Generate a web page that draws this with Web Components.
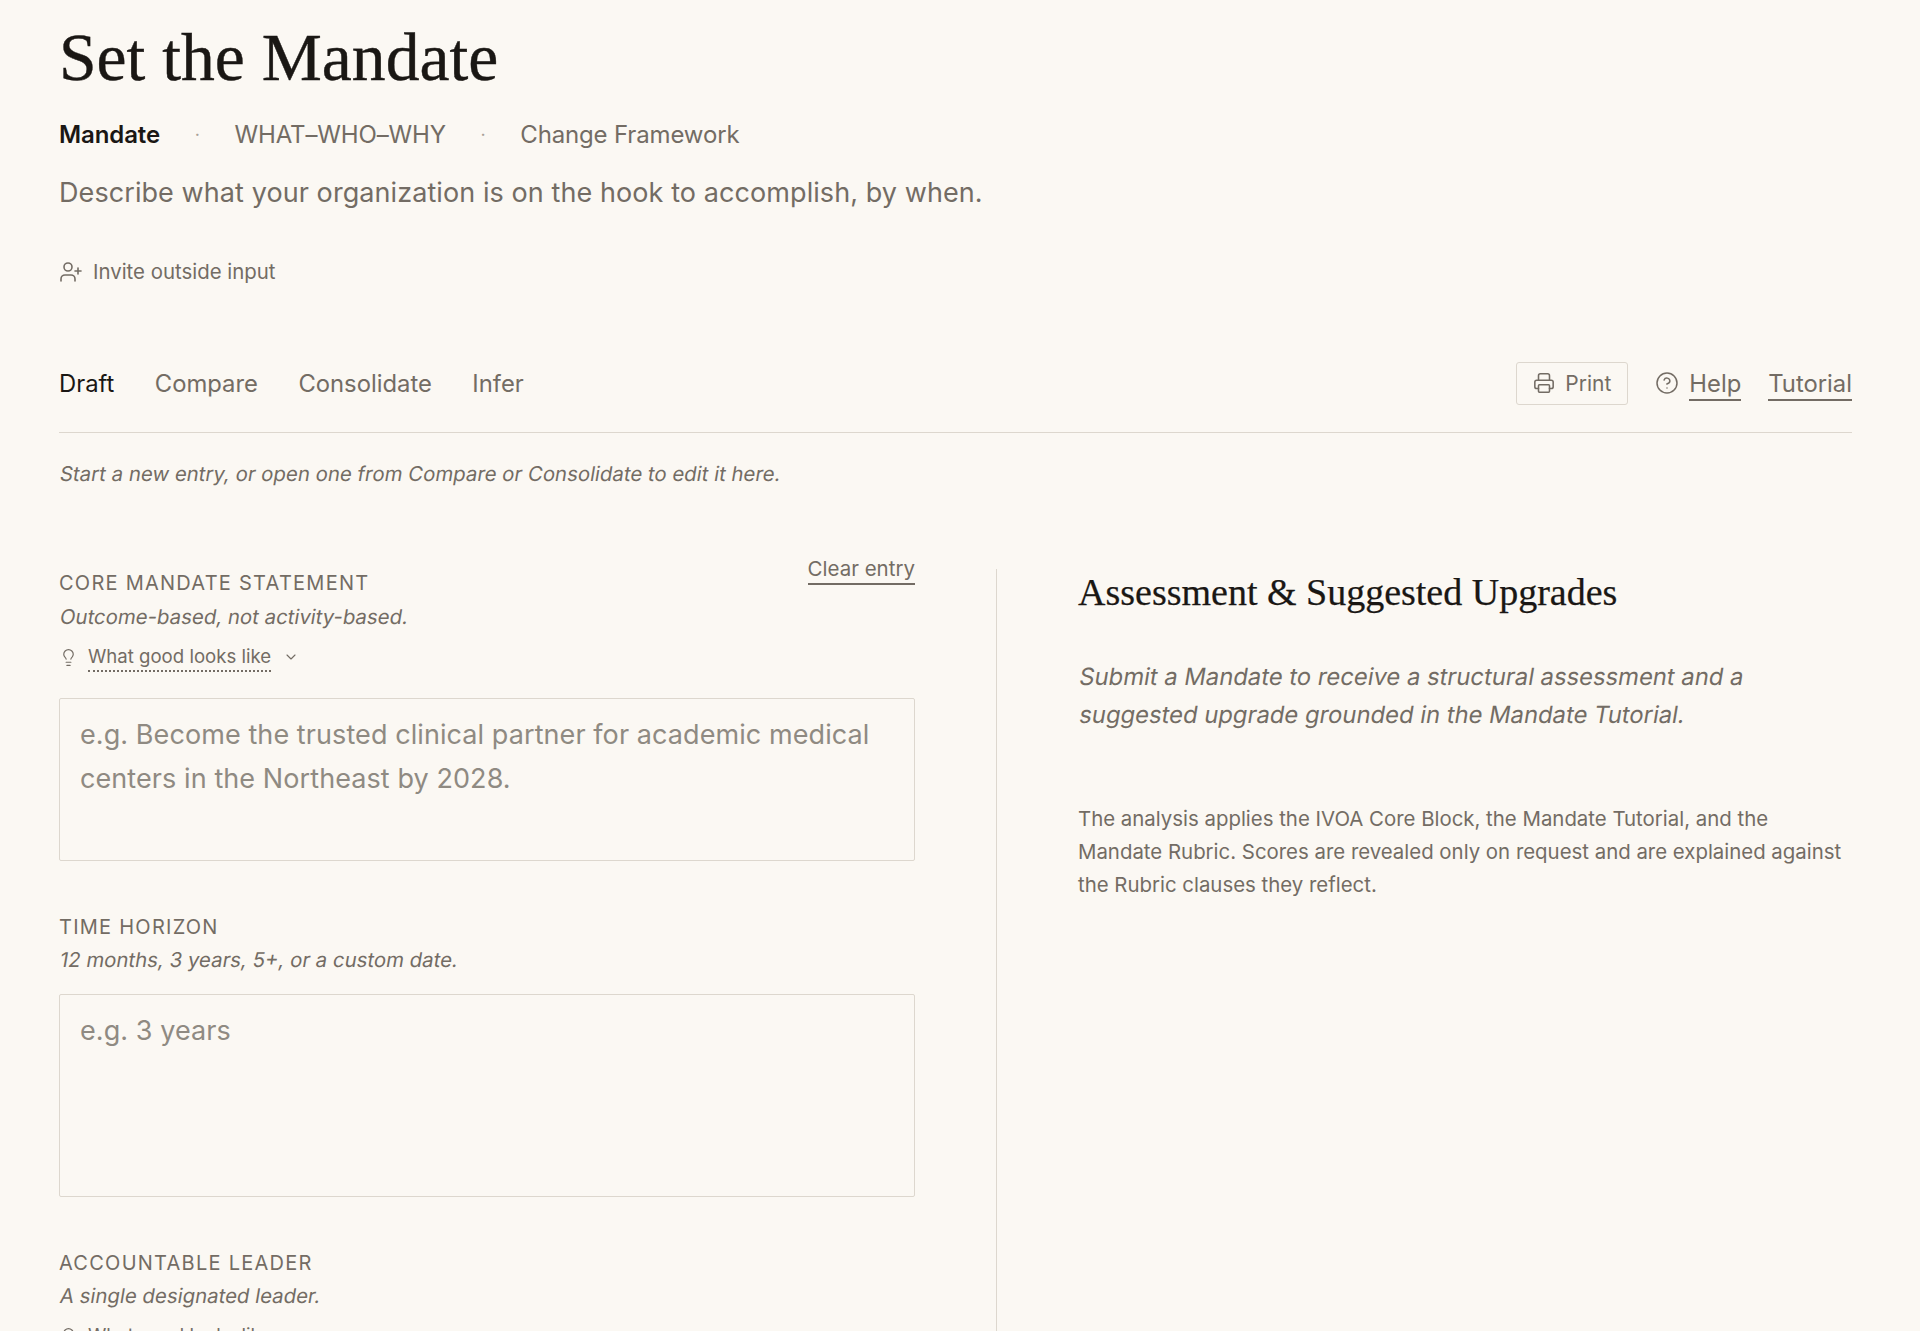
<!DOCTYPE html>
<html lang="en">
<head>
<meta charset="utf-8">
<title>Set the Mandate</title>
<style>
  html, body { margin: 0; height: 1331px; overflow: hidden; background: #fbf8f3; }
  body { font-family: Inter, sans-serif; color: #736c64; }
</style>
</head>
<body>
<mandate-page></mandate-page>

<script>
const icons = {
  invite: `<svg width="24" height="24" viewBox="0 0 24 24" fill="none" stroke="currentColor" stroke-width="1.6" stroke-linecap="round" stroke-linejoin="round"><path d="M16 21v-2a4 4 0 0 0-4-4H6a4 4 0 0 0-4 4v2"/><circle cx="9" cy="7" r="4"/><path d="M19 8v6"/><path d="M22 11h-6"/></svg>`,
  print: `<svg width="22" height="22" viewBox="0 0 24 24" fill="none" stroke="currentColor" stroke-width="1.7" stroke-linecap="round" stroke-linejoin="round"><path d="M6 9V4a2 2 0 0 1 2-2h8a2 2 0 0 1 2 2v5"/><path d="M6 18H4a2 2 0 0 1-2-2v-5a2 2 0 0 1 2-2h16a2 2 0 0 1 2 2v5a2 2 0 0 1-2 2h-2"/><rect x="6" y="14" width="12" height="8" rx="1"/></svg>`,
  help: `<svg width="24" height="24" viewBox="0 0 24 24" fill="none" stroke="currentColor" stroke-width="1.5" stroke-linecap="round" stroke-linejoin="round"><circle cx="12" cy="12" r="10"/><path d="M9.1 9a3 3 0 0 1 5.8 1c0 2-3 3-3 3"/><path d="M12 17h.01"/></svg>`,
  bulb: `<svg width="19" height="19" viewBox="0 0 24 24" fill="none" stroke="currentColor" stroke-width="1.5" stroke-linecap="round" stroke-linejoin="round"><path d="M15 14c.2-1 .7-1.7 1.5-2.5A5.7 5.7 0 0 0 18 8 6 6 0 0 0 6 8c0 1 .2 2.2 1.5 3.5.7.7 1.300 1.500 1.500 2.500"/><path d="M9 18h6"/><path d="M10 22h4"/></svg>`,
  chevron: `<svg width="16" height="16" viewBox="0 0 24 24" fill="none" stroke="currentColor" stroke-width="1.7" stroke-linecap="round" stroke-linejoin="round"><path d="m6 9 6 6 6-6"/></svg>`
}

// the reference italic is a slanted upright with a two-storey a, the installed Inter italic is not
customElements.define('slant-text', class extends HTMLElement {
  constructor () {
    super()
    this.attachShadow({ mode: 'open' }).innerHTML = `
      <style>
        :host { display: block; transform: skewX(-9.4deg); transform-origin: 0 75%; }
      </style>
      <slot></slot>`
  }
})

customElements.define('page-head', class extends HTMLElement {
  constructor () {
    super()
    this.attachShadow({ mode: 'open' }).innerHTML = `
      <style>
        :host { display: block; }
        h1 { margin: 0; font: 400 67.6px/72px "Liberation Serif", serif; color: #1a1714; -webkit-text-stroke: .4px #1a1714; }
        nav { display: flex; align-items: center; margin-top: 25px; font-size: 24px; line-height: 32px; letter-spacing: -.15px; }
        nav b { font-weight: 600; color: #1a1714; letter-spacing: -.1px; }
        nav i { font-style: normal; color: #a8a197; margin: 0 34.7px; font-size: 18px; }
        p { margin: 23.5px 0 0; font-size: 27px; line-height: 36px; letter-spacing: .08px; }
        .invite { display: flex; align-items: center; gap: 10px; margin-top: 46.5px; font-size: 20.4px; line-height: 30px; }
        svg { display: block; }
      </style>
      <h1>Set the Mandate</h1>
      <nav><b>Mandate</b><i>·</i><span>WHAT–WHO–WHY</span><i>·</i><span>Change Framework</span></nav>
      <p>Describe what your organization is on the hook to accomplish, by when.</p>
      <div class="invite">${icons.invite}<span>Invite outside input</span></div>`
  }
})

customElements.define('tab-bar', class extends HTMLElement {
  constructor () {
    super()
    this.attachShadow({ mode: 'open' }).innerHTML = `
      <style>
        :host { display: flex; align-items: center; height: 70px; padding-bottom: 14px; border-bottom: 1px solid #ddd7ce; font-size: 23.8px; }
        .tabs { display: flex; gap: 40.5px; flex: 1; margin-top: 1px; }
        .on { color: #1a1714; }
        .print { display: flex; align-items: center; gap: 10px; box-sizing: border-box; height: 43px; padding: 0 16px; border: 1px solid #ddd7ce; border-radius: 3px; font-size: 21px; margin-right: 27px; }
        .help { display: flex; align-items: center; gap: 10px; margin-right: 27px; }
        a { border-bottom: 2px solid #736c64; line-height: 31px; margin-top: 2px; }
        svg { display: block; }
      </style>
      <div class="tabs"><span class="on">Draft</span><span>Compare</span><span>Consolidate</span><span>Infer</span></div>
      <div class="print">${icons.print}<span>Print</span></div>
      <div class="help">${icons.help}<a>Help</a></div>
      <a>Tutorial</a>`
  }
})

customElements.define('form-field', class extends HTMLElement {
  constructor () {
    super()
    const hint = this.hasAttribute('hint')
    this.attachShadow({ mode: 'open' }).innerHTML = `
      <style>
        :host { display: block; }
        .label { font-size: 20px; line-height: 28px; letter-spacing: 1.25px; text-transform: uppercase; }
        .sub { font-size: 20.4px; line-height: 28px; margin-top: 5.5px; }
        .hint { display: flex; align-items: center; margin-top: 11.5px; font-size: 18.6px; line-height: 28px; height: 30px; }
        .hint span { margin: 0 12px 0 10px; border-bottom: 2px dotted #736c64; line-height: 27px; }
        .hint svg { display: block; }
        .box { box-sizing: border-box; margin-top: 26px; border: 1px solid #ddd7ce; border-radius: 2px; padding: 14px 20px; font-size: 27px; line-height: 44px; color: #8f8a82; letter-spacing: .08px; }
        :host(:not([hint])) .box { margin-top: 20px; }
      </style>
      <div class="label"><slot name="label"></slot></div>
      <slant-text class="sub"><slot name="sub"></slot></slant-text>
      ${hint ? `<div class="hint">${icons.bulb}<span>What good looks like</span>${icons.chevron}</div>` : ''}
      ${this.getAttribute('box') ? `<div class="box" style="height:${this.getAttribute('box')}px"><slot></slot></div>` : ''}`
  }
})

customElements.define('assessment-panel', class extends HTMLElement {
  constructor () {
    super()
    this.attachShadow({ mode: 'open' }).innerHTML = `
      <style>
        :host { display: block; }
        h2 { margin: 0; font: 400 38px/45px "Liberation Serif", serif; color: #1a1714; -webkit-text-stroke: .25px #1a1714; }
        .lead { margin-top: 43px; font-size: 23.8px; line-height: 38px; }
        .note { margin: 68px 0 0; font-size: 20.4px; line-height: 33px; }
      </style>
      <h2>Assessment &amp; Suggested Upgrades</h2>
      <div class="lead">
        <slant-text>Submit a Mandate to receive a structural assessment and a</slant-text>
        <slant-text>suggested upgrade grounded in the Mandate Tutorial.</slant-text>
      </div>
      <p class="note">The analysis applies the IVOA Core Block, the Mandate Tutorial, and the Mandate Rubric. Scores are revealed only on request and are explained against the Rubric clauses they reflect.</p>`
  }
})

customElements.define('mandate-page', class extends HTMLElement {
  constructor () {
    super()
    this.attachShadow({ mode: 'open' }).innerHTML = `
      <style>
        :host { display: block; box-sizing: border-box; height: 1331px; padding: 22px 68px 0 59px; overflow: hidden; }
        .gap { height: 61px; }
        .intro { margin-top: 27px; font-size: 20.4px; line-height: 28px; }
        .cols { display: grid; grid-template-columns: 938px 1fr; margin-top: 81px; height: 800px; }
        .left { position: relative; padding-right: 81px; border-right: 1px solid #ddd7ce; }
        .clear { position: absolute; top: -14px; right: 81px; font-size: 20.5px; line-height: 28px; border-bottom: 2px solid #736c64; }
        .right { padding: 0.5px 0 0 81px; }
        .stack { display: flex; flex-direction: column; }
        form-field + form-field { margin-top: 51.5px; }
      </style>
      <page-head></page-head>
      <div class="gap"></div>
      <tab-bar></tab-bar>
      <slant-text class="intro">Start a new entry, or open one from Compare or Consolidate to edit it here.</slant-text>
      <div class="cols">
        <div class="left">
          <span class="clear">Clear entry</span>
          <div class="stack">
            <form-field hint box="163"><span slot="label">Core Mandate Statement</span><span slot="sub">Outcome-based, not activity-based.</span>e.g. Become the trusted clinical partner for academic medical centers in the Northeast by 2028.</form-field>
            <form-field box="203"><span slot="label">Time Horizon</span><span slot="sub">12 months, 3 years, 5+, or a custom date.</span>e.g. 3 years</form-field>
            <form-field hint><span slot="label">Accountable Leader</span><span slot="sub">A single designated leader.</span></form-field>
          </div>
        </div>
        <div class="right"><assessment-panel></assessment-panel></div>
      </div>`
  }
})
</script>
</body>
</html>
